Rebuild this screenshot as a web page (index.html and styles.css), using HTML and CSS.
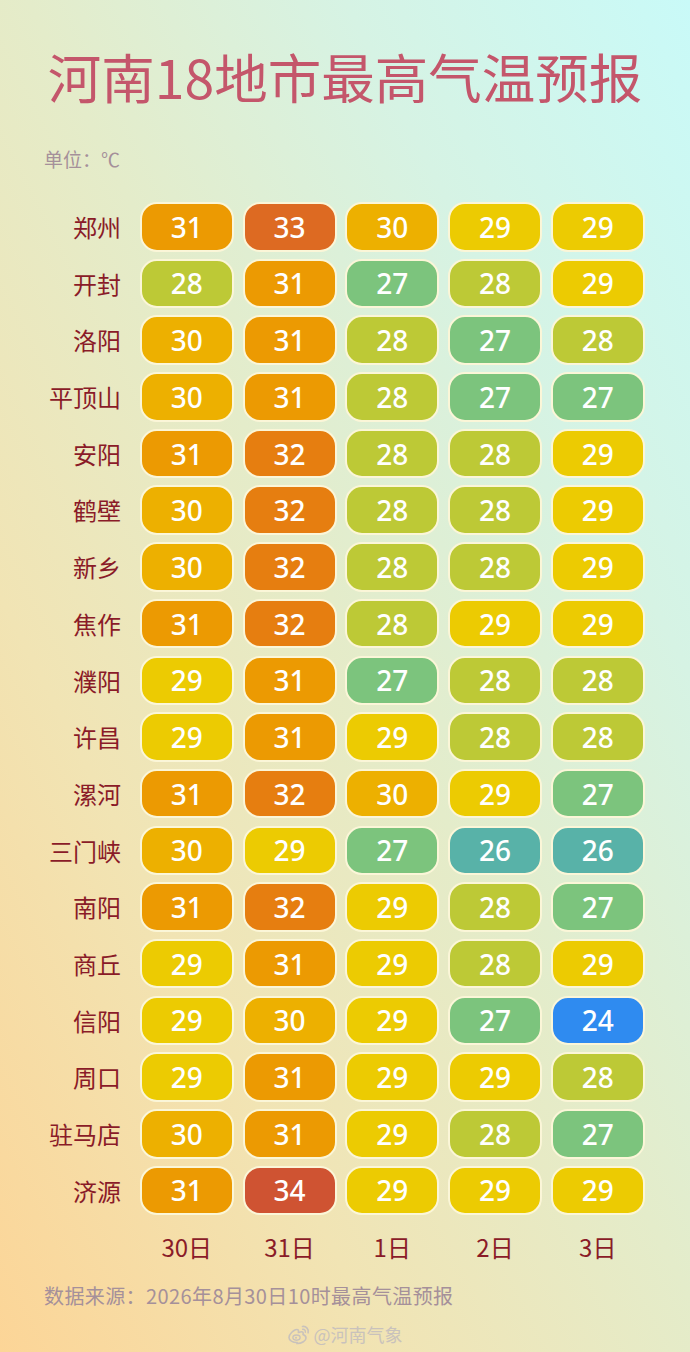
FILE: index.html
```html
<!DOCTYPE html>
<html lang="zh">
<head>
<meta charset="utf-8">
<title>河南18地市最高气温预报</title>
<link rel="stylesheet" href="styles.css">
</head>
<body>
<div class="page">
  <h1 class="title">河南18地市最高气温预报</h1>
  <div class="unit">单位：℃</div>
  <div class="grid">
    <div class="city">郑州</div><div class="c t31">31</div><div class="c t33">33</div><div class="c t30">30</div><div class="c t29">29</div><div class="c t29">29</div>
    <div class="city">开封</div><div class="c t28">28</div><div class="c t31">31</div><div class="c t27">27</div><div class="c t28">28</div><div class="c t29">29</div>
    <div class="city">洛阳</div><div class="c t30">30</div><div class="c t31">31</div><div class="c t28">28</div><div class="c t27">27</div><div class="c t28">28</div>
    <div class="city">平顶山</div><div class="c t30">30</div><div class="c t31">31</div><div class="c t28">28</div><div class="c t27">27</div><div class="c t27">27</div>
    <div class="city">安阳</div><div class="c t31">31</div><div class="c t32">32</div><div class="c t28">28</div><div class="c t28">28</div><div class="c t29">29</div>
    <div class="city">鹤壁</div><div class="c t30">30</div><div class="c t32">32</div><div class="c t28">28</div><div class="c t28">28</div><div class="c t29">29</div>
    <div class="city">新乡</div><div class="c t30">30</div><div class="c t32">32</div><div class="c t28">28</div><div class="c t28">28</div><div class="c t29">29</div>
    <div class="city">焦作</div><div class="c t31">31</div><div class="c t32">32</div><div class="c t28">28</div><div class="c t29">29</div><div class="c t29">29</div>
    <div class="city">濮阳</div><div class="c t29">29</div><div class="c t31">31</div><div class="c t27">27</div><div class="c t28">28</div><div class="c t28">28</div>
    <div class="city">许昌</div><div class="c t29">29</div><div class="c t31">31</div><div class="c t29">29</div><div class="c t28">28</div><div class="c t28">28</div>
    <div class="city">漯河</div><div class="c t31">31</div><div class="c t32">32</div><div class="c t30">30</div><div class="c t29">29</div><div class="c t27">27</div>
    <div class="city">三门峡</div><div class="c t30">30</div><div class="c t29">29</div><div class="c t27">27</div><div class="c t26">26</div><div class="c t26">26</div>
    <div class="city">南阳</div><div class="c t31">31</div><div class="c t32">32</div><div class="c t29">29</div><div class="c t28">28</div><div class="c t27">27</div>
    <div class="city">商丘</div><div class="c t29">29</div><div class="c t31">31</div><div class="c t29">29</div><div class="c t28">28</div><div class="c t29">29</div>
    <div class="city">信阳</div><div class="c t29">29</div><div class="c t30">30</div><div class="c t29">29</div><div class="c t27">27</div><div class="c t24">24</div>
    <div class="city">周口</div><div class="c t29">29</div><div class="c t31">31</div><div class="c t29">29</div><div class="c t29">29</div><div class="c t28">28</div>
    <div class="city">驻马店</div><div class="c t30">30</div><div class="c t31">31</div><div class="c t29">29</div><div class="c t28">28</div><div class="c t27">27</div>
    <div class="city">济源</div><div class="c t31">31</div><div class="c t34">34</div><div class="c t29">29</div><div class="c t29">29</div><div class="c t29">29</div>
    <div class="blank"></div><div class="day">30日</div><div class="day">31日</div><div class="day">1日</div><div class="day">2日</div><div class="day">3日</div>
  </div>
  <div class="source">数据来源：2026年8月30日10时最高气温预报</div>
  <div class="mark">
    <svg class="weibo" viewBox="0 0 24 24" width="24" height="24" aria-hidden="true">
      <path d="M10 20.5c-4.4 0-8-2.1-8-5 0-1.6 1-3.4 2.8-5.2 2.4-2.4 5.2-3.5 6.3-2.4.5.5.5 1.3.2 2.300-.2.5.4.2.4.2 2-.8 3.7-.9 4.3 0 .3.5.3 1.1 0 1.900-.1.4 0 .4.3.5 1.3.4 2.7 1.4 2.7 3.1 0 2.8-4 5.600-9 5.600z" fill="none" stroke="currentColor" stroke-width="1.6"/>
      <ellipse cx="9.5" cy="15.6" rx="3.6" ry="2.6" fill="none" stroke="currentColor" stroke-width="1.4"/>
      <circle cx="9" cy="15.8" r="1" fill="currentColor"/>
      <path d="M15.5 4.5a5 5 0 0 1 5.6 6.3" fill="none" stroke="currentColor" stroke-width="1.6" stroke-linecap="round"/>
      <path d="M15.7 7.3a2.3 2.3 0 0 1 2.6 2.9" fill="none" stroke="currentColor" stroke-width="1.4" stroke-linecap="round"/>
    </svg>
    <span>@河南气象</span>
  </div>
</div>
</body>
</html>
```

FILE: styles.css
```css
html, body {
  margin: 0;
  padding: 0;
}
body {
  width: 690px;
  height: 1352px;
  overflow: hidden;
  font-family: "Noto Sans CJK SC", "Noto Sans", sans-serif;
  background: linear-gradient(to top right, #fcd597 0%, #f1e4b4 28%, #e4ecca 52%, #d6f3e4 75%, #c9faf8 100%);
}
.page {
  display: flex;
  flex-direction: column;
  height: 1352px;
}
.title {
  margin: 44px 0 0;
  text-align: center;
  font-size: 53.5px;
  line-height: 64px;
  font-weight: 400;
  color: #c4566b;
  letter-spacing: 0;
}
.unit {
  margin: 38px 0 0 44px;
  font-size: 19px;
  line-height: 26px;
  color: #a5909a;
}
.grid {
  margin-top: 30px;
  display: grid;
  grid-template-columns: 131px repeat(5, 94px);
  grid-auto-rows: 49.5px;
  column-gap: 8.75px;
  row-gap: 7.2px;
}
.city {
  padding-right: 10px;
  text-align: right;
  font-size: 24px;
  line-height: 49.5px;
  color: #8a1b28;
}
.c {
  box-sizing: border-box;
  border: 2px solid #fbf6d8;
  border-radius: 17px;
  display: flex;
  align-items: center;
  justify-content: center;
  font-family: "Noto Sans", sans-serif;
  font-size: 28px;
  font-weight: 500;
  color: #ffffff;
}
.t24 { background: #2f8bf0; }
.t26 { background: #58b2a8; }
.t27 { background: #7cc47d; }
.t28 { background: #bdc936; }
.t29 { background: #eccb02; }
.t30 { background: #edb000; }
.t31 { background: #ec9a02; }
.t32 { background: #e67e10; }
.t33 { background: #dd6a22; }
.t34 { background: #cf5332; }
.day {
  text-align: center;
  font-size: 24px;
  line-height: 49.5px;
  color: #8a1b28;
}
.source {
  margin: 10px 0 0 44px;
  font-size: 20px;
  line-height: 28px;
  letter-spacing: 0.4px;
  color: #a5909a;
}
.mark {
  margin-top: 11px;
  display: flex;
  justify-content: center;
  align-items: center;
  gap: 2px;
  font-size: 18px;
  line-height: 26px;
  color: #c9c2bc;
}
.weibo {
  display: block;
}
```
